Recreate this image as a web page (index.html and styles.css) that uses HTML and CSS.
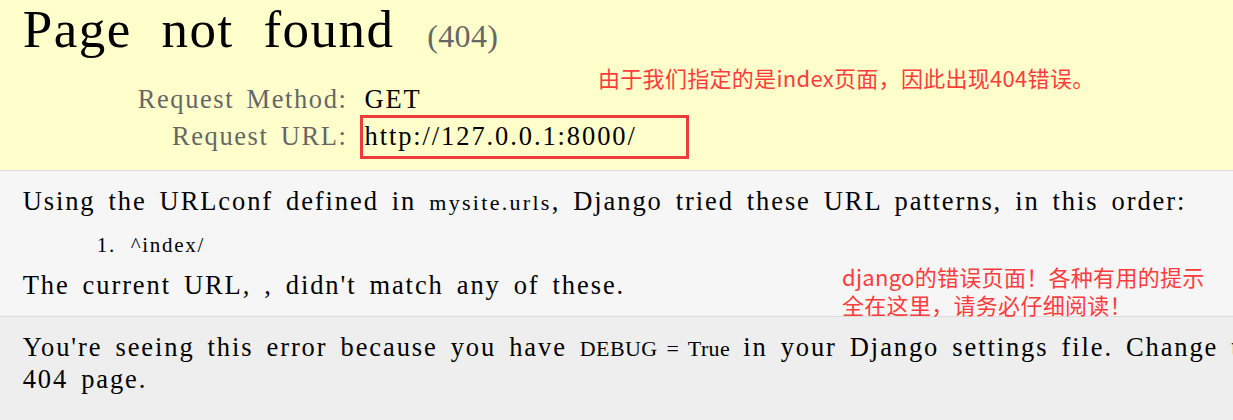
FILE: index.html
```html
<!DOCTYPE html>
<html lang="en">
<head>
<meta charset="utf-8">
<title>Page not found at /</title>
<link rel="stylesheet" href="styles.css">
</head>
<body>
<div id="summary" class="summary">
  <h1 class="title">Page not found <span class="status">(404)</span></h1>
  <table class="meta">
    <tr><th>Request Method:</th><td>GET</td></tr>
    <tr><th>Request URL:</th><td class="url-cell">http://127.0.0.1:8000/<span class="mark-box"></span></td></tr>
  </table>
  <p class="note note-top">由于我们指定的是index页面，因此出现404错误。</p>
</div>
<div id="info" class="info">
  <p>Using the URLconf defined in <code class="code">mysite.urls</code>, Django tried these URL patterns, in this order:</p>
  <ol class="patterns"><li>^index/</li></ol>
  <p>The current URL, , didn't match any of these.</p>
  <p class="note note-bottom">django的错误页面！各种有用的提示<br>全在这里，请务必仔细阅读！</p>
</div>
<div id="explanation" class="explanation">
  <p>You're seeing this error because you have <code class="code code-caps">DEBUG = True</code> in your Django settings file. Change that to False, and Django will display a standard<br>404 page.</p>
</div>
</body>
</html>
```
FILE: styles.css
```css
* { box-sizing: border-box; }
html, body { margin: 0; padding: 0; overflow: hidden; }
body {
  background: #eee;
  color: #000;
  font-family: "Liberation Serif", "Times New Roman", serif;
  font-size: 26.5px;
  line-height: 31px;
  letter-spacing: 1.9px;
  word-spacing: 4.5px;
}
p { margin: 0; }

.summary {
  position: relative;
  background: #ffc;
  border-bottom: 1px solid #ddd;
  padding: 0 22.7px 15px;
}
.title {
  margin: 0;
  font-size: 53px;
  line-height: 59px;
  font-weight: normal;
  letter-spacing: 1.5px;
  word-spacing: 15px;
}
.status {
  font-size: 32px;
  line-height: 1;
  color: #666;
  letter-spacing: 0.3px;
  word-spacing: 0;
  margin-left: 3px;
}
.meta {
  border-collapse: collapse;
  border-spacing: 0;
  margin-top: 22px;
}
.meta th, .meta td {
  box-sizing: content-box;
  vertical-align: top;
  line-height: 31px;
}
.meta th {
  width: 324.8px;
  padding: 3px 8px 3px 0;
  text-align: right;
  font-weight: normal;
  color: #666;
  letter-spacing: 1.6px;
  word-spacing: 4px;
}
.meta td {
  padding: 3px 0 3px 9px;
  white-space: nowrap;
}
.url-cell { position: relative; }
.mark-box {
  position: absolute;
  left: 4.5px;
  top: -2.9px;
  width: 329px;
  height: 44.3px;
  border: 3px solid #ee3b3b;
}

.info {
  position: relative;
  background: #f6f6f6;
  border-bottom: 1px solid #ddd;
  padding: 15.3px 22.7px 15.4px;
}
.code {
  font-family: "Liberation Serif", "Times New Roman", serif;
  font-size: 22px;
  letter-spacing: 2.3px;
  word-spacing: 0;
}
.code-caps {
  letter-spacing: 0.4px;
  word-spacing: 3px;
}
.patterns {
  list-style: none;
  margin: 13.6px 0 11.7px;
  padding: 0 0 0 108px;
  font-size: 21px;
  line-height: 26px;
  letter-spacing: 1.7px;
}
.patterns li::before {
  content: "1.";
  display: inline-block;
  width: 34px;
  margin-left: -34px;
}

.explanation {
  padding: 15.3px 22.7px 20px;
  white-space: nowrap;
}

.note {
  position: absolute;
  z-index: 2;
  margin: 0;
  font-family: "Noto Sans CJK SC", sans-serif;
  font-size: 22px;
  color: #ff3b3b;
  letter-spacing: 0.3px;
  word-spacing: 0;
  white-space: nowrap;
}
.note-top {
  left: 598px;
  top: 66px;
  line-height: 22px;
}
.note-bottom {
  left: 842px;
  top: 92px;
  line-height: 27.5px;
}
```
